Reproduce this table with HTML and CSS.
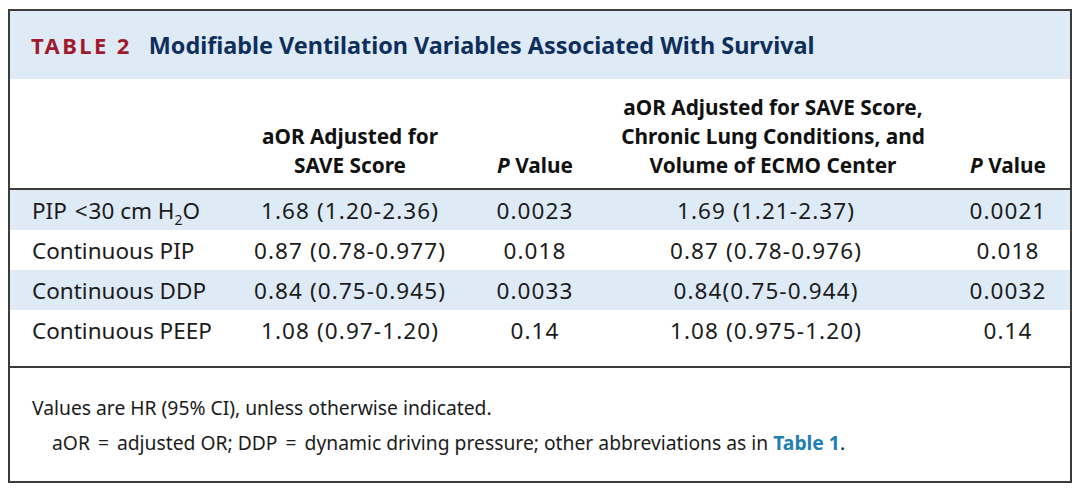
FILE: index.html
```html
<!DOCTYPE html>
<html>
<head>
<meta charset="utf-8">
<link rel="stylesheet" href="styles.css">
</head>
<body>
<div class="box">
  <div class="caption">
    <span class="label">TABLE 2</span>
    <span class="title">Modifiable Ventilation Variables Associated With Survival</span>
  </div>
  <table class="data">
    <colgroup>
      <col class="c1"><col class="c2"><col class="c3"><col class="c4"><col class="c5">
    </colgroup>
    <thead>
      <tr>
        <th></th>
        <th>aOR Adjusted for<br>SAVE Score</th>
        <th><i>P</i> Value</th>
        <th class="k4">aOR Adjusted for SAVE Score,<br>Chronic Lung Conditions, and<br>Volume of ECMO Center</th>
        <th class="k5"><i>P</i> Value</th>
      </tr>
    </thead>
    <tbody>
      <tr class="shade">
        <td>PIP <span class="lt">&lt;</span>30 cm H<sub>2</sub>O</td>
        <td class="num">1.68 (1.20-2.36)</td>
        <td class="num">0.0023</td>
        <td class="num k4">1.69 (1.21-2.37)</td>
        <td class="num k5">0.0021</td>
      </tr>
      <tr>
        <td>Continuous PIP</td>
        <td class="num">0.87 (0.78-0.977)</td>
        <td class="num">0.018</td>
        <td class="num k4">0.87 (0.78-0.976)</td>
        <td class="num k5">0.018</td>
      </tr>
      <tr class="shade">
        <td>Continuous DDP</td>
        <td class="num">0.84 (0.75-0.945)</td>
        <td class="num">0.0033</td>
        <td class="num k4">0.84(0.75-0.944)</td>
        <td class="num k5">0.0032</td>
      </tr>
      <tr>
        <td>Continuous PEEP</td>
        <td class="num">1.08 (0.97-1.20)</td>
        <td class="num">0.14</td>
        <td class="num k4">1.08 (0.975-1.20)</td>
        <td class="num k5">0.14</td>
      </tr>
      <tr class="spacer"><td colspan="5"></td></tr>
    </tbody>
  </table>
  <div class="notes">
    <p class="n1">Values are HR (95% CI), unless otherwise indicated.</p>
    <p class="n2">aOR <span class="op">=</span> adjusted OR; DDP <span class="op">=</span> dynamic driving pressure; other abbreviations as in <span class="ref">Table 1</span>.</p>
  </div>
</div>
</body>
</html>
```

FILE: styles.css
```css
html, body {
  margin: 0;
  padding: 0;
  background: #ffffff;
}
body {
  padding: 9px 0 0 8px;
  font-family: "Noto Sans", "Open Sans", sans-serif;
  color: #1b1b1b;
}
.box {
  width: 1060px;
  height: 470px;
  border: 2px solid #3c3c3c;
  display: flex;
  flex-direction: column;
  overflow: hidden;
}
.caption {
  flex-shrink: 0;
  height: 68px;
  background: #deeaf6;
  display: flex;
  align-items: center;
  padding-left: 21px;
  gap: 17px;
}
.label {
  color: #a01a2e;
  font-weight: 700;
  font-size: 22px;
  letter-spacing: 2.4px;
}
.title {
  color: #0e2f5c;
  font-weight: 700;
  font-size: 23.4px;
}
.data {
  flex-shrink: 0;
  border-collapse: collapse;
  table-layout: fixed;
  width: 1060px;
}
.c1 { width: 230px; }
.c2 { width: 220px; }
.c3 { width: 150px; }
.c4 { width: 330px; }
.c5 { width: 130px; }
.data th {
  height: 101px;
  vertical-align: bottom;
  font-weight: 700;
  font-size: 20.8px;
  line-height: 29px;
  padding: 0 0 8px 0;
  text-align: center;
  color: #111;
  white-space: nowrap;
  border-bottom: 2px solid #3c3c3c;
}
.data td {
  height: 40px;
  padding: 0;
  font-size: 22.5px;
  text-align: center;
  vertical-align: middle;
  white-space: nowrap;
}
.data th.k4 { padding-right: 4px; }
.data td.k4 { padding-right: 18px; }
.data .k5 { padding-left: 6px; }
.data td.num { letter-spacing: 1.1px; }
.data td:first-child {
  text-align: left;
  padding-left: 22px;
}
.data sub {
  font-size: 14px;
  line-height: 0;
}
.lt {
  display: inline-block;
  margin: 0 1px 0 2px;
}
.op {
  display: inline-block;
  margin: 0 3px;
}
.shade td { background: #deeaf6; }
.spacer td { height: 16px; border-bottom: 2px solid #3c3c3c; }
.notes {
  flex-shrink: 0;
  padding: 30px 0 0 22px;
  font-size: 19.3px;
}
.notes p { margin: 0; }
.n1 { line-height: 20px; }
.n2 { margin-top: 15px !important; padding-left: 20px; line-height: 20px; }
.ref { color: #1d7fb3; font-weight: 700; }
```
